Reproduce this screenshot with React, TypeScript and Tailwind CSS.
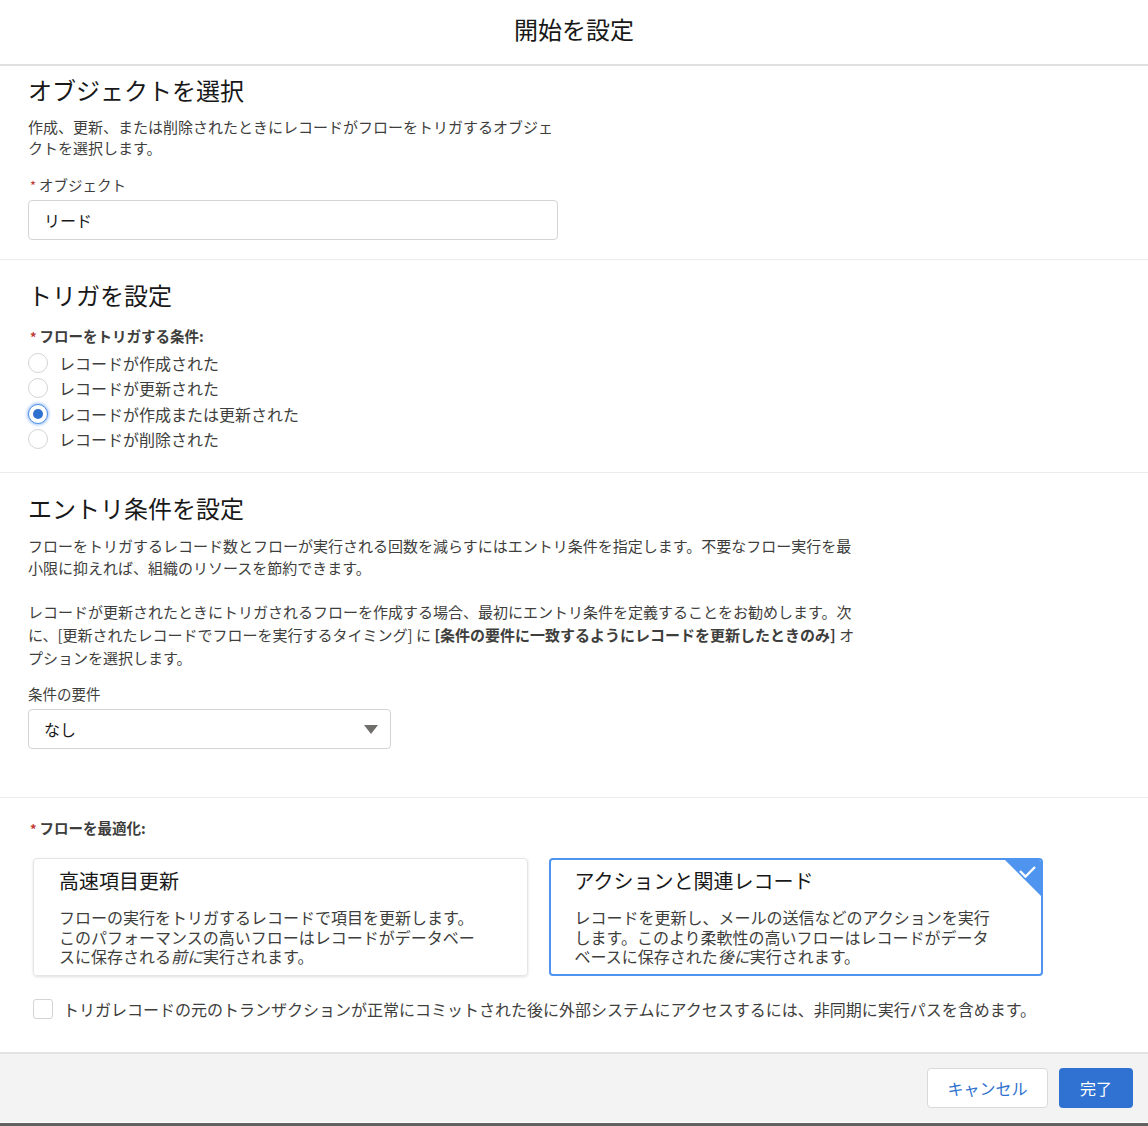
import React from "react";

const font = { fontFamily: '"Noto Sans CJK JP", "Noto Sans", sans-serif' };

const Req = () => <span className="text-[#c23934] mr-[3px] text-[13px]">*</span>;

const Radio = ({ label, checked }: { label: string; checked?: boolean }) => (
  <div className="flex items-center h-[25.5px]">
    {checked ? (
      <span className="w-[20px] h-[20px] rounded-full border border-[#4e8fe6] bg-white flex items-center justify-center shadow-[0_0_3px_1px_#9ec3f5]">
        <span className="w-[10px] h-[10px] rounded-full bg-[#2e71cf]"></span>
      </span>
    ) : (
      <span className="w-[20px] h-[20px] rounded-full border border-[#d4d4d4] bg-white"></span>
    )}
    <span className="ml-[11px] text-[16px] leading-[20px] text-[#3e3e3c]">{label}</span>
  </div>
);

const App = () => {
  return (
    <div className="w-[1148px] h-[1126px] bg-white flex flex-col overflow-hidden" style={font}>
      {/* Header */}
      <div className="shrink-0 h-[66px] border-b-2 border-[#e0e0e0] flex items-center justify-center">
        <h1 className="text-[24px] text-[#181818] leading-[32px] -mt-[6px]">開始を設定</h1>
      </div>

      {/* オブジェクトを選択 */}
      <section className="shrink-0 px-[28px] pt-[8px] pb-[19px] border-b border-[#ececec]">
        <h2 className="text-[24px] leading-[32px] text-[#181818]">オブジェクトを選択</h2>
        <p className="mt-[10px] max-w-[530px] text-[15px] leading-[21px] text-[#3e3e3c]">
          作成、更新、または削除されたときにレコードがフローをトリガするオブジェクトを選択します。
        </p>
        <div className="mt-[17px] text-[14.5px] leading-[20px] text-[#3e3e3c] pl-[2px]">
          <Req />オブジェクト
        </div>
        <div className="mt-[4px] w-[530px] h-[40px] border border-[#d4d4d4] rounded-[4px] flex items-center pl-[15px] text-[16px] text-[#181818]">
          リード
        </div>
      </section>

      {/* トリガを設定 */}
      <section className="shrink-0 px-[28px] pt-[19px] pb-[20px] border-b border-[#ececec]">
        <h2 className="text-[24px] leading-[32px] text-[#181818]">トリガを設定</h2>
        <div className="mt-[15px] text-[14.5px] leading-[20px] font-bold text-[#3e3e3c] pl-[2px]">
          <Req />フローをトリガする条件:
        </div>
        <div className="mt-[3px] flex flex-col">
          <Radio label="レコードが作成された" />
          <Radio label="レコードが更新された" />
          <Radio label="レコードが作成または更新された" checked />
          <Radio label="レコードが削除された" />
        </div>
      </section>

      {/* エントリ条件を設定 */}
      <section className="shrink-0 px-[28px] pt-[19px] pb-[48px] border-b border-[#ececec]">
        <h2 className="text-[24px] leading-[32px] text-[#181818]">エントリ条件を設定</h2>
        <p className="mt-[11px] max-w-[830px] text-[15px] leading-[22px] text-[#3e3e3c]">
          フローをトリガするレコード数とフローが実行される回数を減らすにはエントリ条件を指定します。不要なフロー実行を最小限に抑えれば、組織のリソースを節約できます。
        </p>
        <p className="mt-[21px] max-w-[830px] text-[15px] leading-[23px] text-[#3e3e3c]">
          レコードが更新されたときにトリガされるフローを作成する場合、最初にエントリ条件を定義することをお勧めします。次に、[更新されたレコードでフローを実行するタイミング] に <strong className="font-bold">[条件の要件に一致するようにレコードを更新したときのみ]</strong> オプションを選択します。
        </p>
        <div className="mt-[15px] text-[14.5px] leading-[20px] text-[#3e3e3c]">条件の要件</div>
        <div className="mt-[5px] w-[363px] h-[40px] border border-[#d4d4d4] rounded-[4px] flex items-center justify-between pl-[15px] pr-[12px] text-[16px] text-[#181818]">
          <span>なし</span>
          <svg width="14" height="9" viewBox="0 0 14 9">
            <polygon points="0,0 14,0 7,9" fill="#706e6b" />
          </svg>
        </div>
      </section>

      {/* フローを最適化 */}
      <section className="shrink-0 pl-[33px] pr-[105px] pt-[20px]">
        <div className="text-[14.5px] leading-[20px] font-bold text-[#3e3e3c] -ml-[3px]">
          <Req />フローを最適化:
        </div>
        <div className="mt-[19px] grid grid-cols-2 gap-[21px]">
          <div className="h-[118px] rounded-[4px] border border-[#e5e5e5] shadow-[0_1px_3px_rgba(0,0,0,0.12)] pl-[25px] pr-[20px] pt-[8px]">
            <div className="text-[20px] leading-[28px] text-[#181818]">高速項目更新</div>
            <p className="mt-[13px] max-w-[420px] text-[16px] leading-[19.5px] text-[#3e3e3c]">
              フローの実行をトリガするレコードで項目を更新します。このパフォーマンスの高いフローはレコードがデータベースに保存される<em className="italic">前に</em>実行されます。
            </p>
          </div>
          <div className="relative h-[118px] rounded-[4px] border-2 border-[#4f94ee] pl-[24px] pr-[20px] pt-[7px] overflow-hidden">
            <div className="text-[20px] leading-[28px] text-[#181818]">アクションと関連レコード</div>
            <p className="mt-[13px] max-w-[420px] text-[16px] leading-[19.5px] text-[#3e3e3c]">
              レコードを更新し、メールの送信などのアクションを実行します。このより柔軟性の高いフローはレコードがデータベースに保存された<em className="italic">後に</em>実行されます。
            </p>
            <svg className="absolute top-0 right-0" width="36" height="36" viewBox="0 0 36 36">
              <polygon points="0,0 36,0 36,36" fill="#4f94ee" />
              <path d="M15 11 L20.5 16.5 L30 7" stroke="white" strokeWidth="2.4" fill="none" />
            </svg>
          </div>
        </div>
        <div className="mt-[23px] flex items-center">
          <span className="w-[20px] h-[20px] rounded-[3px] border border-[#d4d4d4] bg-white"></span>
          <span className="ml-[10px] text-[16px] leading-[20px] text-[#3e3e3c] whitespace-nowrap">
            トリガレコードの元のトランザクションが正常にコミットされた後に外部システムにアクセスするには、非同期に実行パスを含めます。
          </span>
        </div>
      </section>

      {/* Footer */}
      <div className="shrink-0 mt-auto">
        <div className="h-[70px] bg-[#f3f3f3] border-t-2 border-[#e2e2e2] flex items-center justify-end gap-[11px] pr-[15px]">
          <button className="w-[121px] h-[40px] rounded-[4px] bg-white border border-[#d9d9d9] text-[16px] text-[#2e71cf]">
            キャンセル
          </button>
          <button className="w-[74px] h-[40px] rounded-[4px] bg-[#2f72d1] text-[16px] text-white">
            完了
          </button>
        </div>
        <div className="h-[1px] bg-white"></div>
        <div className="h-[3px] bg-[#626262]"></div>
      </div>
    </div>
  );
};

export default App;
